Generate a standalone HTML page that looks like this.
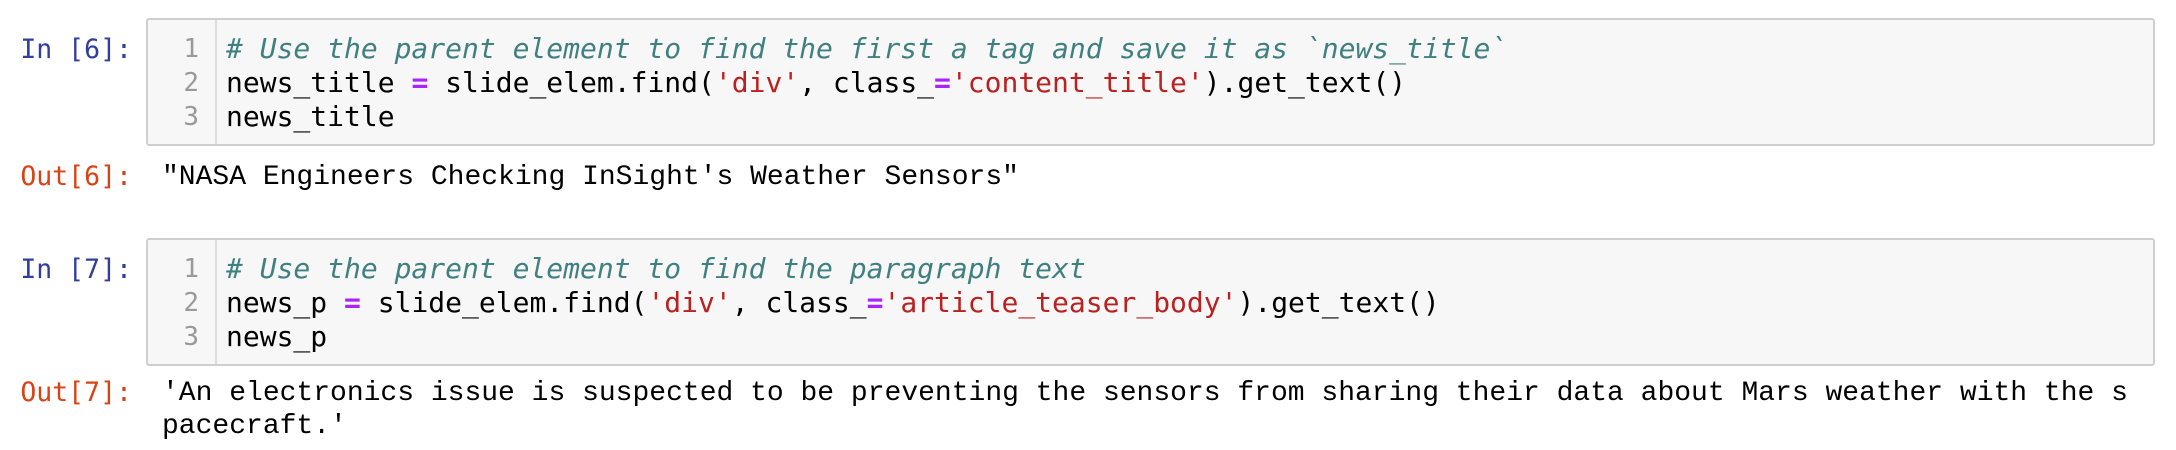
<!DOCTYPE html>
<html><head><meta charset="utf-8"><style>
body{margin:0;background:#fff;width:2176px;height:450px;overflow:hidden;position:relative}
.p{position:absolute;font-family:"DejaVu Sans Mono","Liberation Mono",monospace;font-size:26.5px;line-height:34px;right:2044px;white-space:pre}
.in{color:#303F9F}.out{color:#D84315}
.box{position:absolute;left:146px;width:2005px;height:124px;background:#f7f7f7;border:2px solid #cfcfcf;border-radius:3px}
.gut{position:absolute;left:0;top:0;width:67px;height:100%;border-right:2px solid #ddd}
.ln{position:absolute;right:16px;top:12px;font-family:"DejaVu Sans Mono",monospace;font-size:26px;line-height:34px;color:#999;text-align:right;white-space:pre}
.code{position:absolute;left:78px;top:12px;font-family:"DejaVu Sans Mono",monospace;font-size:28px;line-height:34px;color:#000;white-space:pre}
.c{color:#408080;font-style:italic}.s{color:#BA2121}.o{color:#AA22FF;font-weight:bold}
.txt{position:absolute;left:162px;font-family:"Liberation Mono",monospace;font-size:28px;line-height:33px;color:#000;white-space:pre}
</style></head><body>
<div class="p in" style="top:33px">In [6]:</div>
<div class="box" style="top:18px"><div class="gut"><div class="ln">1
2
3</div></div><div class="code"><span class="c"># Use the parent element to find the first a tag and save it as `news_title`</span>
news_title <span class="o">=</span> slide_elem.find(<span class="s">'div'</span>, class_<span class="o">=</span><span class="s">'content_title'</span>).get_text()
news_title</div></div>
<div class="p out" style="top:160px">Out[6]:</div>
<div class="txt" style="top:161px">"NASA Engineers Checking InSight's Weather Sensors"</div>

<div class="p in" style="top:253px">In [7]:</div>
<div class="box" style="top:238px"><div class="gut"><div class="ln">1
2
3</div></div><div class="code"><span class="c"># Use the parent element to find the paragraph text</span>
news_p <span class="o">=</span> slide_elem.find(<span class="s">'div'</span>, class_<span class="o">=</span><span class="s">'article_teaser_body'</span>).get_text()
news_p</div></div>
<div class="p out" style="top:376px">Out[7]:</div>
<div class="txt" style="top:377px">'An electronics issue is suspected to be preventing the sensors from sharing their data about Mars weather with the s
pacecraft.'</div>
</body></html>
